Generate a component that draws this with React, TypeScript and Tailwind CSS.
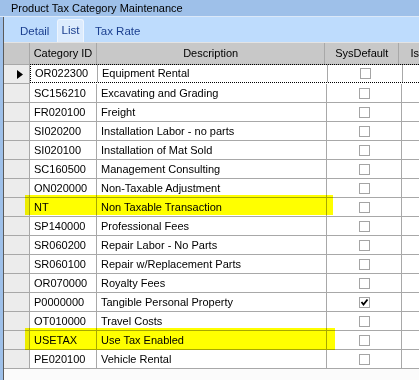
import React from 'react';

type Row = { id: string; desc: string; checked?: boolean; mark?: 'a' | 'b' };

const rows: Row[] = [
  { id: 'OR022300', desc: 'Equipment Rental' },
  { id: 'SC156210', desc: 'Excavating and Grading' },
  { id: 'FR020100', desc: 'Freight' },
  { id: 'SI020200', desc: 'Installation Labor - no parts' },
  { id: 'SI020100', desc: 'Installation of Mat Sold' },
  { id: 'SC160500', desc: 'Management Consulting' },
  { id: 'ON020000', desc: 'Non-Taxable Adjustment' },
  { id: 'NT', desc: 'Non Taxable Transaction', mark: 'a' },
  { id: 'SP140000', desc: 'Professional Fees' },
  { id: 'SR060200', desc: 'Repair Labor - No Parts' },
  { id: 'SR060100', desc: 'Repair w/Replacement Parts' },
  { id: 'OR070000', desc: 'Royalty Fees' },
  { id: 'P0000000', desc: 'Tangible Personal Property', checked: true },
  { id: 'OT010000', desc: 'Travel Costs' },
  { id: 'USETAX', desc: 'Use Tax Enabled', mark: 'b' },
  { id: 'PE020100', desc: 'Vehicle Rental' },
];

function CheckBox({ checked }: { checked?: boolean }) {
  return (
    <div className="w-[11px] h-[11px] border border-[#a4a4a4] bg-white flex items-center justify-center">
      {checked && (
        <svg width="9" height="9" viewBox="0 0 9 9">
          <path d="M1.5 4 L3.5 6.5 L7.5 1.5" stroke="#000" strokeWidth="1.8" fill="none" />
        </svg>
      )}
    </div>
  );
}

export default function App() {
  return (
    <div
      className="w-[419px] h-[380px] overflow-hidden bg-white text-[11px] text-black relative"
      style={{ fontFamily: '"Liberation Sans", Arial, sans-serif' }}
    >
      {/* title bar */}
      <div className="h-[16px] bg-[#9ec0e9] pl-[11px] leading-[16px]">Product Tax Category Maintenance</div>
      <div className="h-[1px] bg-[#dbe8f8]" />

      <div className="flex h-[363px]">
        <div className="w-[3px] bg-[#9ec0e9]" />
        <div className="w-[1px] bg-[#5a5a5a]" />
        <div className="flex-1 flex flex-col min-w-0">
          {/* tabs */}
          <div className="h-[25px] bg-[#bedcfd] flex items-end text-[11.5px] text-[#1b3f8f]">
            <div className="w-[53px] pl-[16px] pb-[2px]">Detail</div>
            <div className="w-[27px] h-[23px] bg-[#dcebfd] border-t border-l border-r border-[#eef5fe] rounded-t-[3px] flex justify-center pt-[2px]">List</div>
            <div className="pl-[11px] pb-[2px]">Tax Rate</div>
          </div>
          <div className="h-[1px] bg-[#e4e4e4]" />

          {/* header */}
          <div className="flex h-[22px] bg-[#c8c8c8] border-b border-[#a8a8a8]">
            <div className="w-[26px] border-r border-[#a8a8a8]" />
            <div className="w-[68px] border-r border-[#a8a8a8] flex items-center justify-center">Category ID</div>
            <div className="w-[230px] border-r border-[#a8a8a8] flex items-center justify-center">Description</div>
            <div className="w-[75px] border-r border-[#a8a8a8] flex items-center justify-center">SysDefault</div>
            <div className="flex-1 pl-[11px] flex items-center">Is</div>
          </div>

          {/* rows */}
          {rows.map((r, i) => (
            <div key={r.id} className="flex h-[19px] relative">
              <div className="w-[26px] bg-[#ececec] border-r border-b border-[#a8a8a8] flex items-center pl-[13px]">
                {i === 0 && (
                  <svg width="6" height="9" viewBox="0 0 6 9">
                    <path d="M0 0 L6 4.5 L0 9 Z" fill="#000" />
                  </svg>
                )}
              </div>
              <div
                className={
                  i === 0
                    ? 'flex-1 flex border-l border-t border-b border-dotted border-black -mt-[1px] h-[19px]'
                    : 'flex-1 flex border-b border-[#a8a8a8]'
                }
              >
                <div className="w-[67px] border-r border-[#a8a8a8] flex items-center pl-[4px]">{r.id}</div>
                <div className="w-[230px] border-r border-[#a8a8a8] flex items-center pl-[4px] whitespace-nowrap">{r.desc}</div>
                <div className="w-[75px] border-r border-[#a8a8a8] flex items-center justify-center">
                  <CheckBox checked={r.checked} />
                </div>
                <div className="flex-1" />
              </div>
              {r.mark === 'a' && (
                <div className="absolute left-[21px] top-[-3px] w-[308px] h-[20px] bg-[#ffff00] mix-blend-multiply" />
              )}
              {r.mark === 'b' && (
                <div className="absolute left-[21px] top-[-3px] w-[310px] h-[22px] bg-[#ffff00] mix-blend-multiply" />
              )}
            </div>
          ))}
          <div className="flex-1 bg-[#fbfbfb]" />
        </div>
      </div>
    </div>
  );
}
